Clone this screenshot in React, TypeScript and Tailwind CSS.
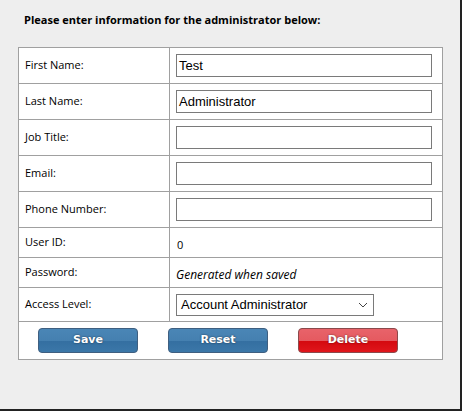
import React from 'react';

const font = { fontFamily: '"Open Sans", "Noto Sans", sans-serif' };
const arial = { fontFamily: '"Liberation Sans", Arial, sans-serif' };

function TextField({ value }: { value?: string }) {
  return (
    <div
      className="w-[256px] h-[23px] border border-[#7a7a7a] bg-white flex items-center px-[2px] text-[13px] text-black leading-none"
      style={arial}
    >
      {value}
    </div>
  );
}

function Chevron() {
  return (
    <svg width="10" height="6" viewBox="0 0 10 6" className="text-[#444]">
      <path d="M1 1 L5 5 L9 1" fill="none" stroke="currentColor" strokeWidth="1" />
    </svg>
  );
}

const rows: { label: string; h: string; content: React.ReactNode }[] = [
  { label: 'First Name:', h: 'h-[36px]', content: <TextField value="Test" /> },
  { label: 'Last Name:', h: 'h-[36px]', content: <TextField value="Administrator" /> },
  { label: 'Job Title:', h: 'h-[36px]', content: <TextField /> },
  { label: 'Email:', h: 'h-[36px]', content: <TextField /> },
  { label: 'Phone Number:', h: 'h-[36px]', content: <TextField /> },
  { label: 'User ID:', h: 'h-[30px]', content: <span className="text-[11px] pl-[1px]">0</span> },
  {
    label: 'Password:',
    h: 'h-[30px]',
    content: <span className="text-[12px] italic">Generated when saved</span>,
  },
  {
    label: 'Access Level:',
    h: 'h-[34px]',
    content: (
      <div
        className="w-[198px] h-[22px] border border-[#7a7a7a] bg-white flex items-center justify-between pl-[4px] pr-[5px] text-[13px] leading-none"
        style={arial}
      >
        <span>Account Administrator</span>
        <Chevron />
      </div>
    ),
  },
];

function Button({ label, red }: { label: string; red?: boolean }) {
  return (
    <button
      className={
        'w-[100px] h-[25px] rounded-[4px] border text-white font-bold text-[11px] [text-shadow:0_0_2px_rgba(0,0,0,0.6)] ' +
        (red
          ? 'border-[#8a4a4c] bg-[linear-gradient(#e8636a_0%,#e55a60_50%,#d4090f_52%,#e0161c_100%)]'
          : 'border-[#3f5f80] bg-[linear-gradient(#4a86b6_0%,#4580b0_50%,#346fa1_52%,#3b77a8_100%)]')
      }
      style={{ fontFamily: '"DejaVu Sans", Verdana, sans-serif' }}
    >
      {label}
    </button>
  );
}

export default function App() {
  return (
    <div
      className="w-[462px] h-[411px] bg-[#eeeeee] border-r-2 border-b-2 border-[#222] text-black"
      style={font}
    >
      <div className="pl-[24px] pt-[12px] text-[11px] font-bold leading-[16px]">
        Please enter information for the administrator below:
      </div>
      <table className="mt-[19px] ml-[18px] w-[425px] border-collapse bg-white">
        <tbody>
          {rows.map((r) => (
            <tr key={r.label} className={r.h}>
              <td className="w-[151px] border border-[#a0a0a0] pl-[6px] text-[11px] align-middle">
                {r.label}
              </td>
              <td className="border border-[#a0a0a0] pl-[6px] align-middle">{r.content}</td>
            </tr>
          ))}
          <tr className="h-[38px]">
            <td colSpan={2} className="border border-[#a0a0a0] align-middle">
              <div className="flex gap-[30px] pl-[19px]">
                <Button label="Save" />
                <Button label="Reset" />
                <Button label="Delete" red />
              </div>
            </td>
          </tr>
        </tbody>
      </table>
    </div>
  );
}
